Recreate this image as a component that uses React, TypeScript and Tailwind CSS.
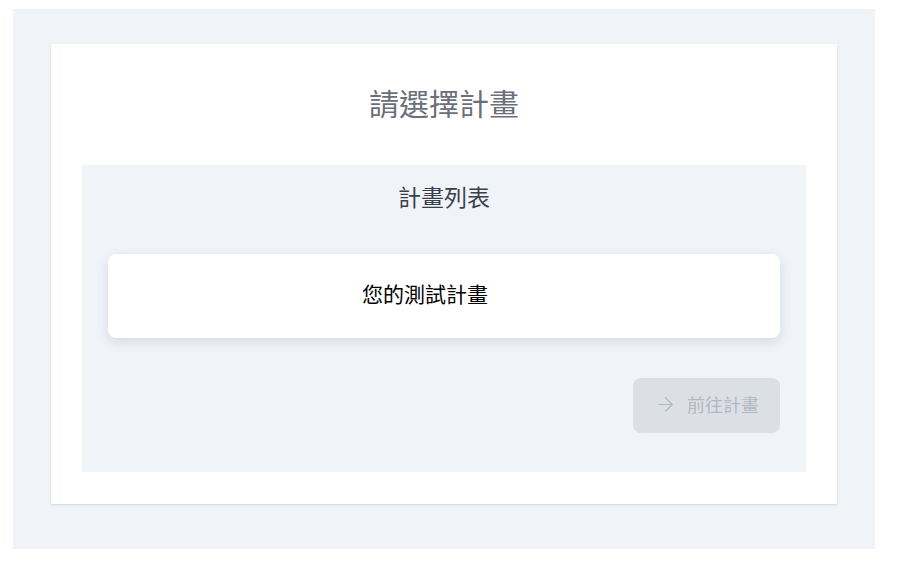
import React, { useState } from 'react';
import { ArrowRight } from 'lucide-react';

const plans = ['您的測試計畫'];

const App: React.FC = () => {
  const [selected, setSelected] = useState<string | null>(null);

  return (
    <div className="w-[901px] h-[561px] bg-white font-['Noto_Sans_CJK_TC','Noto_Sans',sans-serif]">
      <div className="ml-[13px] pt-[9px]">
        <div className="w-[862px] h-[540px] bg-[#f0f3f8] px-[38px] pt-[35px]">
          {/* Main card */}
          <div className="bg-white shadow-sm px-[31px] pt-[36px] pb-[32px]">
            <h1 className="text-center text-[30px] leading-[45px] text-[#6b6f7b] mb-[40px]">請選擇計畫</h1>

            {/* Plan list */}
            <div className="bg-[#f0f3f8] px-[26px] pt-[15px] pb-[39px]">
              <h2 className="text-center text-[23px] leading-[32px] text-[#3a3f4b]">計畫列表</h2>
              <div className="mt-[42px] flex flex-col gap-4">
                {plans.map(p => (
                  <button
                    key={p}
                    onClick={() => setSelected(p)}
                    className="h-[84px] w-full rounded-lg bg-white shadow-[0_4px_12px_rgba(100,110,130,0.18)] text-[21px] text-black flex items-center justify-center pr-[38px] pb-[4px]"
                  >
                    {p}
                  </button>
                ))}
              </div>
              <div className="mt-[40px] flex justify-end">
                <button
                  disabled={!selected}
                  className="h-[55px] w-[147px] rounded-lg bg-[#dcdfe6] text-[#b3b7c1] text-[18px] flex items-center justify-center gap-[10px] pb-[2px]"
                >
                  <ArrowRight className="w-[23px] h-[23px]" strokeWidth={1.3} />
                  前往計畫
                </button>
              </div>
            </div>
          </div>
        </div>
      </div>
    </div>
  );
};

export default App;
